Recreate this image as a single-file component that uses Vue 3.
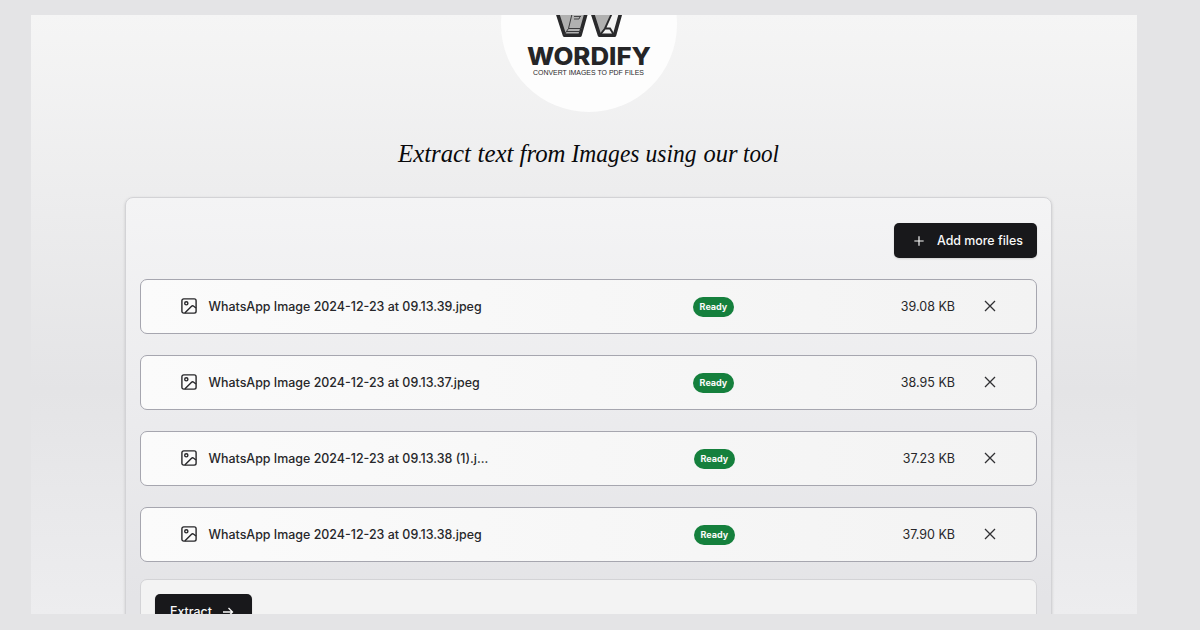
<script setup>
const files = [
  { name: 'WhatsApp Image 2024-12-23 at 09.13.39.jpeg', size: '39.08 KB' },
  { name: 'WhatsApp Image 2024-12-23 at 09.13.37.jpeg', size: '38.95 KB' },
  { name: 'WhatsApp Image 2024-12-23 at 09.13.38 (1).j...', size: '37.23 KB' },
  { name: 'WhatsApp Image 2024-12-23 at 09.13.38.jpeg', size: '37.90 KB' }
]
</script>

<template>
  <div class="frame">
    <main class="page">
      <div class="logo">
        <svg class="mark" width="70" height="24" viewBox="0 0 70 24">
          <path d="M3-3L10.500 20H26L32.500-3Z" fill="#b0b0b0" />
          <path d="M38-3L46 20H61L67-3Z" fill="#f3f3f3" />
          <path d="M38-3H58L51 13L46 20Z" fill="#b0b0b0" />
          <path d="M3-3L10.500 20.200H26L32.500-3M38-3L45.500 20.200H60.500L67-3" fill="none" stroke="#29292b" stroke-width="3.600" stroke-linejoin="round" />
          <path d="M18-1L14.500 13.500L10 20M14.500 13.500H28M13 16.500H27" fill="none" stroke="#39393b" stroke-width="1" />
          <path d="M58-2L51 13.500L46 20M51 13.500H56L60 20" fill="none" stroke="#29292b" stroke-width="1.900" />
          <path d="M20 1.500H27M20 4H25L26 1.500" fill="none" stroke="#444446" stroke-width="1" />
        </svg>
        <svg class="wordmark" width="130" height="38" viewBox="0 0 130 38">
          <text x="3" y="22.500" class="brand" textLength="124" lengthAdjust="spacingAndGlyphs">WORDIFY</text>
          <text x="9" y="33" class="tag" textLength="111" lengthAdjust="spacingAndGlyphs">CONVERT IMAGES TO PDF FILES</text>
        </svg>
      </div>
      <h1>
        <svg width="390" height="36" viewBox="0 0 390 36">
          <text y="24" class="headline">
            <tspan x="5" textLength="73" lengthAdjust="spacingAndGlyphs">Extract</tspan>
            <tspan x="84.500" textLength="36" lengthAdjust="spacingAndGlyphs">text</tspan>
            <tspan x="126.500" textLength="46" lengthAdjust="spacingAndGlyphs">from</tspan>
            <tspan x="178.500" textLength="68" lengthAdjust="spacingAndGlyphs">Images</tspan>
            <tspan x="252.500" textLength="51" lengthAdjust="spacingAndGlyphs">using</tspan>
            <tspan x="310.500" textLength="34" lengthAdjust="spacingAndGlyphs">our</tspan>
            <tspan x="350" textLength="36" lengthAdjust="spacingAndGlyphs">tool</tspan>
          </text>
        </svg>
      </h1>
      <section class="panel">
        <div class="toolbar">
          <button class="btn add">
            <svg width="14" height="14" viewBox="0 0 24 24" fill="none" stroke="currentColor" stroke-width="2"><path d="M4 12H20M12 4V20" /></svg>
            <span>Add more files</span>
          </button>
        </div>
        <ul class="list">
          <li v-for="file in files" :key="file.name" class="row">
            <div class="name">
              <svg width="16" height="16" viewBox="0 0 16 16" fill="none" stroke="#27272a" stroke-width="1.400">
                <rect x=".9" y=".9" width="14.200" height="14.200" rx="1.800" />
                <circle cx="5.300" cy="5.300" r="1.600" />
                <path d="M3.800 15L10.300 8.500Q11.500 7.300 12.700 8.200L15 10" />
              </svg>
              <span>{{ file.name }}</span>
            </div>
            <span class="badge">Ready</span>
            <div class="meta">
              <span>{{ file.size }}</span>
              <svg width="12" height="12" viewBox="0 0 12 12" fill="none" stroke="#303033" stroke-width="1.300"><path d="M1 1L11 11M11 1L1 11" /></svg>
            </div>
          </li>
        </ul>
        <div class="footer">
          <button class="btn extract">
            <span>Extract</span>
            <svg width="12" height="12" viewBox="0 0 12 12" fill="none" stroke="currentColor" stroke-width="1.300"><path d="M1 6H10.500M6.500 2L10.500 6L6.500 10" /></svg>
          </button>
        </div>
      </section>
    </main>
  </div>
</template>

<style>
body { margin: 0; }
</style>

<style scoped>
.frame {
  box-sizing: border-box;
  width: 1200px;
  height: 630px;
  padding: 15px 63px 16px 31px;
  background: #e4e4e6;
  overflow: hidden;
  font-family: Inter, sans-serif;
  color: #27272a;
}
.page {
  height: 599px;
  overflow: hidden;
  display: flex;
  flex-direction: column;
  align-items: center;
  background: linear-gradient(#f5f5f5, #e4e4e6 375px, #ededef 599px);
}
.logo {
  flex: none;
  width: 176px;
  height: 176px;
  margin-top: -79px;
  margin-left: 10px;
  border-radius: 50%;
  background: #fdfdfd;
  display: flex;
  flex-direction: column;
  align-items: center;
}
.mark { margin-top: 79px; flex: none; }
.wordmark { margin-top: 3px; flex: none; }
.brand { font: 800 24px Inter, sans-serif; fill: #252527; }
.tag { font: 400 7.500px "Liberation Sans", sans-serif; fill: #29292b; }
h1 { margin: 26px 0 0 8px; height: 36px; flex: none; }
h1 svg { display: block; }
.headline { font: italic 400 26px "Liberation Serif", serif; fill: #09090b; }
.panel {
  box-sizing: border-box;
  flex: none;
  width: 927px;
  height: 480px;
  margin: 23px 0 0 9px;
  padding: 25px 14px 0;
  border: 1px solid #d3d3d6;
  border-radius: 8px;
  background: linear-gradient(#f4f4f5, #e4e4e7 400px);
  box-shadow: 0 1px 3px #00000025;
}
.toolbar { display: flex; justify-content: flex-end; }
.btn {
  display: flex;
  align-items: center;
  height: 35px;
  border: 0;
  border-radius: 5px;
  background: #18181b;
  color: #fafafa;
  font: 550 12.400px Inter, sans-serif;
  box-shadow: 0 1px 2px #0002;
}
.add { width: 143px; padding: 0 0 0 18px; gap: 11px; white-space: nowrap; }
.list { list-style: none; margin: 21px 0 0; padding: 0; display: flex; flex-direction: column; gap: 21px; }
.row {
  box-sizing: border-box;
  height: 55px;
  padding: 0 40px;
  border: 1px solid #a6a6af;
  border-radius: 7px;
  background: linear-gradient(90deg, #fbfbfb, #f3f3f3);
  display: flex;
  align-items: center;
  justify-content: space-between;
}
.name { display: flex; align-items: center; gap: 11.500px; width: 345px; font-size: 12.450px; font-weight: 550; white-space: nowrap; }
.row svg { position: relative; top: -.5px; }
.name span, .meta span { position: relative; top: -.5px; }
.badge { box-sizing: border-box; width: 41px; height: 20px; border-radius: 11px; background: #15803d; color: #fafafa; font-size: 9px; line-height: 20px; font-weight: 700; text-align: center; }
.meta { display: flex; align-items: center; gap: 29px; font-size: 12.500px; font-weight: 400; }
.footer { height: 80px; margin-top: 17px; padding: 14px; border: 1px solid #d3d3d6; border-radius: 7px; background: #f3f3f3; }
.extract { width: 97px; padding: 0 0 0 15px; gap: 10px; }
</style>
